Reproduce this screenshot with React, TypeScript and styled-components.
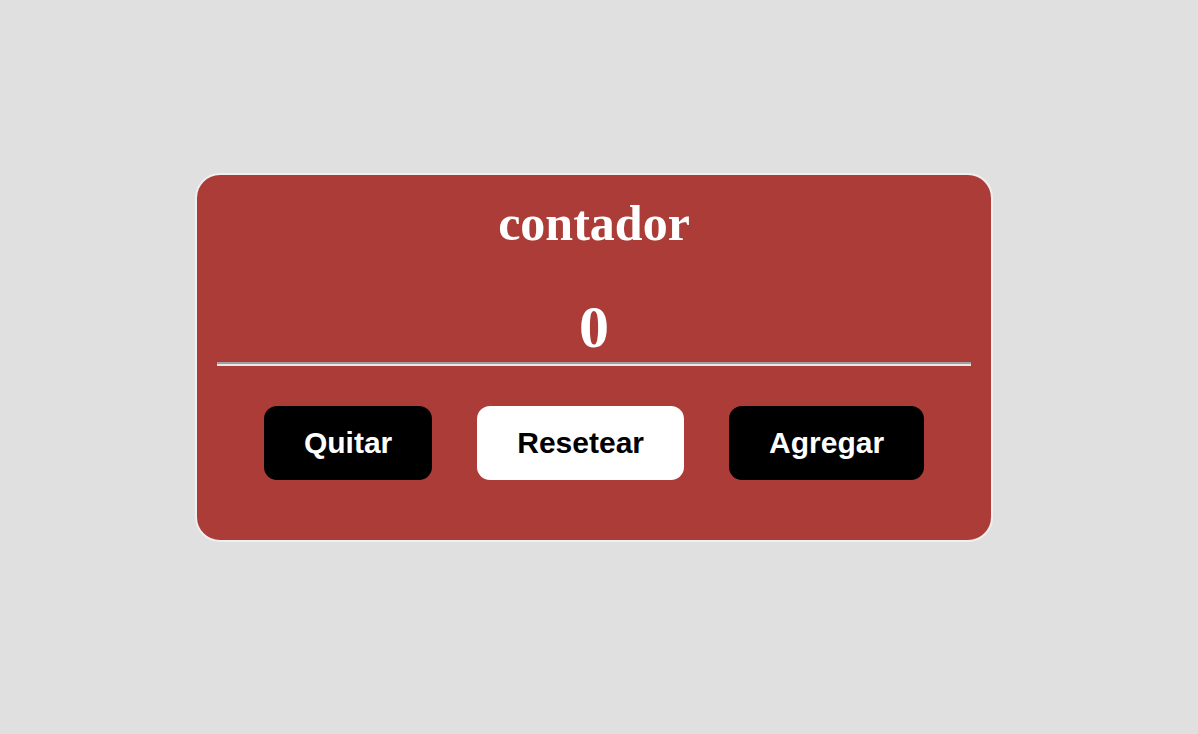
import React, { useState } from "react";
import styled, { createGlobalStyle } from "styled-components";

const GlobalStyle = createGlobalStyle`
  html, body {
    margin: 0;
    padding: 0;
    background: #e0e0e0;
  }
  * { box-sizing: border-box; }
`;

const Page = styled.div`
  min-height: 734px;
  padding: 173px 0 0 195px;
`;

const Card = styled.section`
  width: 798px;
  border: 2px solid #efefef;
  border-radius: 25px;
  background: #ac3c37;
  padding: 0 20px 60px;
  display: flex;
  flex-direction: column;
  align-items: stretch;
`;

const Title = styled.h1`
  margin: 21px 0 0;
  font-family: "Liberation Serif", "Times New Roman", serif;
  font-weight: 700;
  font-size: 50px;
  line-height: 55px;
  color: #ffffff;
  text-align: center;
`;

const Count = styled.h2`
  margin: 43px 0 0;
  font-family: "Liberation Serif", "Times New Roman", serif;
  font-weight: 700;
  font-size: 60px;
  line-height: 66px;
  color: #ffffff;
  text-align: center;
`;

const Divider = styled.hr`
  margin: 2px 0 0;
  height: 0;
  border: none;
  border-top: 2px solid #a0a0a0;
  border-bottom: 2px solid #e8e8e8;
`;

const Actions = styled.div`
  margin-top: 40px;
  display: flex;
  justify-content: center;
  gap: 45px;
`;

const Button = styled.button<{ $light?: boolean }>`
  height: 74px;
  padding: 0 40px;
  border: none;
  border-radius: 13px;
  background: ${(p) => (p.$light ? "#ffffff" : "#000000")};
  color: ${(p) => (p.$light ? "#000000" : "#ffffff")};
  font-family: "Liberation Sans", Arial, sans-serif;
  font-weight: 700;
  font-size: 30px;
  cursor: pointer;
`;

export default function App() {
  const [count, setCount] = useState(0);
  return (
    <Page>
      <GlobalStyle />
      <Card>
        <Title>contador</Title>
        <Count>{count}</Count>
        <Divider />
        <Actions>
          <Button onClick={() => setCount((c) => c - 1)}>Quitar</Button>
          <Button $light onClick={() => setCount(0)}>
            Resetear
          </Button>
          <Button onClick={() => setCount((c) => c + 1)}>Agregar</Button>
        </Actions>
      </Card>
    </Page>
  );
}
